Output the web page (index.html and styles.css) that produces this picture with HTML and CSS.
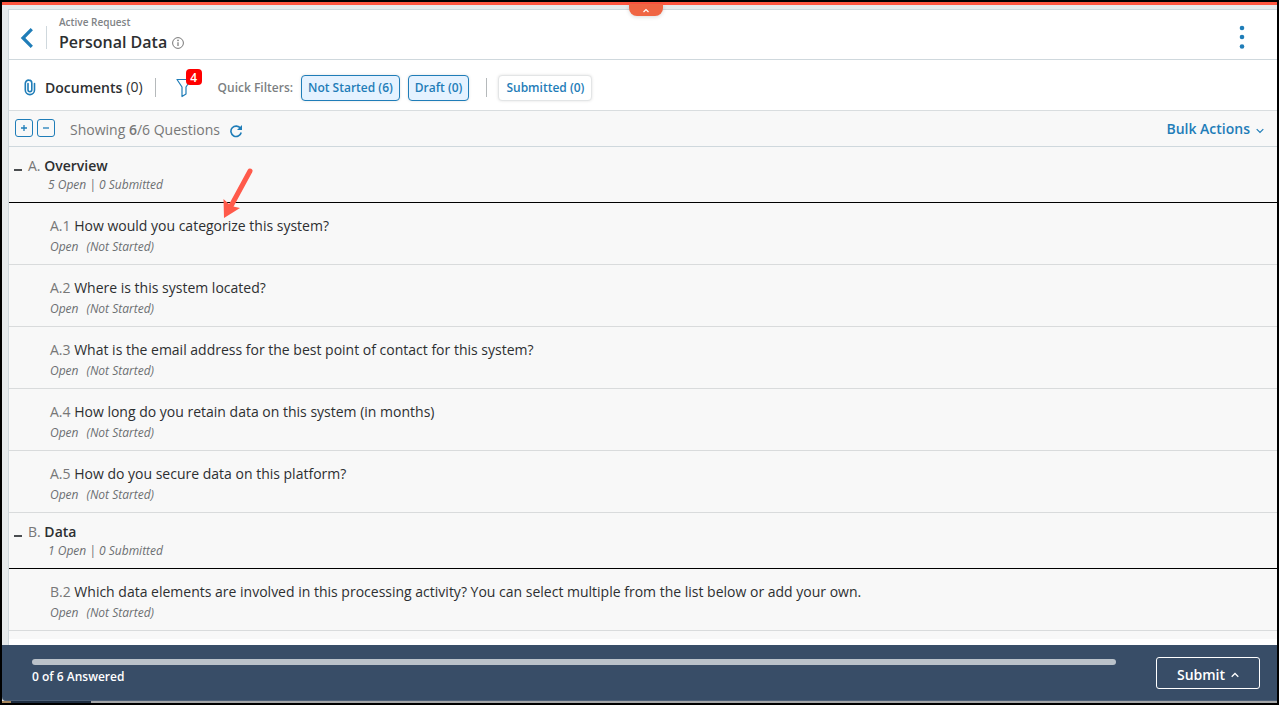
FILE: index.html
```html
<!DOCTYPE html>
<html lang="en">
<head>
<meta charset="utf-8">
<title>Personal Data</title>
<meta name="viewport" content="width=device-width, initial-scale=1">
<link rel="stylesheet" href="styles.css">
</head>
<body>
<div class="frame">
  <div class="accent"></div>
  <button class="pull-tab" aria-label="Collapse header"><svg width="8" height="5" viewBox="0 0 8 5"><path d="M1.500 4 4 1.500 6.500 4" fill="none" stroke="#fff" stroke-width="1.200"/></svg></button>
  <main class="panel">
    <header class="page-header">
      <button class="back" aria-label="Back"><svg width="14" height="20" viewBox="0 0 14 20"><path d="M11.800 1.200 3 10l8.800 8.800" fill="none" stroke="#1f7db8" stroke-width="3.200"/></svg></button>
      <div class="heading">
        <p class="eyebrow">Active Request</p>
        <h1 class="title">Personal Data <svg class="info" width="12" height="12" viewBox="0 0 12 12"><circle cx="6" cy="6" r="5.400" fill="none" stroke="#777" stroke-width="1"/><path d="M6 5.200V9" fill="none" stroke="#777" stroke-width="1.200"/><circle cx="6" cy="3.400" r=".8" fill="#777"/></svg></h1>
      </div>
      <button class="more" aria-label="More options"><svg width="6" height="24" viewBox="0 0 6 24"><g fill="#1f7db8"><circle cx="3" cy="3" r="2.300"/><circle cx="3" cy="12" r="2.300"/><circle cx="3" cy="21.500" r="2.300"/></g></svg></button>
    </header>

    <div class="filters">
      <button class="documents"><svg width="12" height="17" viewBox="0 0 12 17"><path d="M4 4.500v6.300a1.900 1.900 0 0 0 3.800 0V4A3 3 0 0 0 4.800 1.100 3.400 3.400 0 0 0 1.300 4.600v6.400a4.600 4.600 0 0 0 9.200 0V4.500" fill="none" stroke="#1f7db8" stroke-width="1.600" stroke-linecap="round"/></svg><span class="documents-label">Documents</span><span class="documents-count">(0)</span></button>
      <span class="divider"></span>
      <button class="funnel" aria-label="Filters"><svg width="16" height="20" viewBox="0 0 16 20"><path d="M1 1.500h14L10 9v7l-4 2.500V9z" fill="none" stroke="#1f7db8" stroke-width="1.200" stroke-linejoin="round"/></svg><span class="badge">4</span></button>
      <span class="quick-label">Quick Filters:</span>
      <button class="chip chip-on" aria-pressed="true">Not Started (6)</button>
      <button class="chip chip-on" aria-pressed="true">Draft (0)</button>
      <span class="divider divider-chips"></span>
      <button class="chip" aria-pressed="false">Submitted (0)</button>
    </div>

    <div class="toolbar">
      <button class="square" aria-label="Expand all"><svg width="8" height="8" viewBox="0 0 8 8"><path d="M4 1v6M1 4h6" stroke="#1f7db8" stroke-width="1.300"/></svg></button>
      <button class="square" aria-label="Collapse all"><svg width="8" height="8" viewBox="0 0 8 8"><path d="M1 4h6" stroke="#1f7db8" stroke-width="1.300"/></svg></button>
      <span class="showing">Showing <b>6</b>/6 Questions</span>
      <button class="refresh" aria-label="Refresh"><svg width="14" height="14" viewBox="0 0 14 14"><path d="M11.500 4.500A5.200 5.200 0 1 0 12.200 8.500" fill="none" stroke="#1f7db8" stroke-width="1.600"/><path d="M13 1v5H8z" fill="#1f7db8"/></svg></button>
      <button class="bulk">Bulk Actions <svg width="8" height="6" viewBox="0 0 8 6"><path d="M.7 1.200 4 4.500l3.300-3.300" fill="none" stroke="#1f7db8" stroke-width="1.200"/></svg></button>
    </div>

    <div class="questions">
      <section>
        <div class="section-head">
          <button class="toggle" aria-label="Collapse Overview"></button>
          <div>
            <h2 class="section-title"><span class="num">A.</span> Overview</h2>
            <p class="section-meta">5 Open | 0 Submitted</p>
          </div>
        </div>
        <ul class="list">
          <li class="item"><p class="question"><span class="num">A.1</span> How would you categorize this system?</p><p class="status"><span>Open</span><span>(Not Started)</span></p></li>
          <li class="item"><p class="question"><span class="num">A.2</span> Where is this system located?</p><p class="status"><span>Open</span><span>(Not Started)</span></p></li>
          <li class="item"><p class="question"><span class="num">A.3</span> What is the email address for the best point of contact for this system?</p><p class="status"><span>Open</span><span>(Not Started)</span></p></li>
          <li class="item"><p class="question"><span class="num">A.4</span> How long do you retain data on this system (in months)</p><p class="status"><span>Open</span><span>(Not Started)</span></p></li>
          <li class="item"><p class="question"><span class="num">A.5</span> How do you secure data on this platform?</p><p class="status"><span>Open</span><span>(Not Started)</span></p></li>
        </ul>
      </section>
      <section>
        <div class="section-head">
          <button class="toggle" aria-label="Collapse Data"></button>
          <div>
            <h2 class="section-title"><span class="num">B.</span> Data</h2>
            <p class="section-meta">1 Open | 0 Submitted</p>
          </div>
        </div>
        <ul class="list">
          <li class="item"><p class="question"><span class="num">B.2</span> Which data elements are involved in this processing activity? You can select multiple from the list below or add your own.</p><p class="status"><span>Open</span><span>(Not Started)</span></p></li>
        </ul>
      </section>
    </div>
  </main>

  <footer class="footer">
    <div class="progress">
      <div class="track" role="progressbar" aria-label="Questions answered" aria-valuemin="0" aria-valuemax="6" aria-valuenow="0"></div>
      <p class="answered">0 of 6 Answered</p>
    </div>
    <button class="submit">Submit <svg width="8" height="6" viewBox="0 0 8 6"><path d="M.7 4.800 4 1.500l3.300 3.300" fill="none" stroke="#fff" stroke-width="1.300"/></svg></button>
  </footer>
  <div class="edge"><span class="edge-tan"></span><span class="edge-dark"></span></div>

  <svg class="arrow" width="32" height="54" viewBox="0 0 32 54" aria-hidden="true"><path d="M28 5 9 40" stroke="#ff5a4b" stroke-width="5" stroke-linecap="round"/><path d="M1.500 33 2 52 18 42 9 40z" fill="#ff5a4b"/></svg>
</div>
</body>
</html>
```
FILE: styles.css
```css
* { box-sizing: border-box; }
body { margin: 0; font-family: "Open Sans", "Noto Sans", sans-serif; font-size: 14px; line-height: 20px; color: #2d2f31; }
p, h1, h2, ul { margin: 0; padding: 0; }
button { font: inherit; color: inherit; background: none; border: 0; padding: 0; cursor: pointer; }
svg { display: block; flex: none; }

.frame { position: relative; display: flex; flex-direction: column; min-height: 100vh; border: 2px solid #000; background: #e6eaec; }
.accent { height: 3px; background: #ff5640; }
.pull-tab { position: absolute; top: 2px; left: calc(50% - 11px); width: 34px; height: 12px; display: flex; align-items: center; justify-content: center; background: #f06543; border-radius: 0 0 8px 8px; box-shadow: 0 1px 4px rgba(0, 0, 0, .15); }

.panel { flex: 1; margin: 4px 0 0 6px; border-top: 1px solid #cfd8dd; border-left: 1px solid #cfd8dd; background: #fff; }

.page-header { display: flex; align-items: center; height: 50px; padding: 0 32px 0 11px; border-bottom: 1px solid #cfd8dd; }
.back { padding: 7px 12px 0 0; }
.heading { position: relative; padding: 1px 0 0 13px; }
.heading::before { content: ""; position: absolute; left: 0; top: 12px; bottom: 6px; width: 1px; background: #cfd8dd; }
.eyebrow { font-size: 10px; line-height: 14px; font-weight: 600; color: #808386; }
.title { display: flex; align-items: center; gap: 5px; font-size: 16px; line-height: 26px; font-weight: 600; }
.info { margin-top: 2px; }
.more { margin-left: auto; padding-top: 5px; }

.filters { display: flex; align-items: center; height: 51px; padding: 5px 16px 0 15px; border-bottom: 1px solid #d9dddf; }
.documents { display: flex; align-items: center; }
.documents-label { margin-left: 9px; font-weight: 600; }
.documents-count { margin: 0 12px 2px 4px; }
.divider { width: 1px; height: 19px; background: #b5b9bb; }
.funnel { position: relative; margin: 0 26px 0 20px; }
.badge { position: absolute; left: 10px; top: -9px; width: 16px; height: 16px; border-radius: 4px; background: #f00; color: #fff; font-size: 12px; line-height: 17px; font-weight: 600; }
.quick-label { margin-right: 8px; font-size: 12px; font-weight: 600; color: #7c7f82; }
.chip { height: 26px; padding: 0 7px; border: 1px solid #e3e5e6; border-radius: 4px; background: #fff; box-shadow: 0 0 3px rgba(0, 0, 0, .12); color: #1f7db8; font-size: 12px; line-height: 18px; font-weight: 600; }
.chip-on { margin-right: 8px; padding: 0 6px; border-color: #1f7db8; background: #e5f2ff; }
.divider-chips { margin: 0 11px 0 9px; }

.toolbar { display: flex; align-items: center; height: 36px; padding: 0 13px 0 6px; border-bottom: 1px solid #cfd8dd; background: #f8f8f8; }
.square { display: flex; align-items: center; justify-content: center; width: 18px; height: 18px; margin: 0 4px 2px 0; border: 1px solid #1f7db8; border-radius: 3px; }
.showing { margin: 2px 9px 0 11px; color: #777; }
.showing b { font-weight: 600; }
.refresh { padding-top: 4px; }
.bulk { display: flex; align-items: center; gap: 6px; margin-left: auto; color: #1f7db8; font-weight: 600; }
.bulk svg { margin-top: 4px; }

.questions { padding-bottom: 8px; background: #f8f8f8; }
.section-head { display: flex; height: 56px; padding: 9px 16px 0 5px; border-bottom: 1px solid #000; }
.toggle { width: 8px; height: 2px; margin: 13px 6px 0 0; background: #4a4d50; }
.section-title { font-size: 14px; line-height: 20px; font-weight: 600; }
.section-title .num { font-weight: 400; }
.num { color: #777; }
.section-meta { padding-left: 20px; font-size: 12px; line-height: 18px; font-style: italic; color: #6c6f72; }
.list { list-style: none; }
.item { height: 62px; padding: 13px 16px 0 41px; border-bottom: 1px solid #d9dbdc; }
.status { display: flex; gap: 8px; font-size: 12px; line-height: 22px; font-style: italic; color: #6c6f72; }

.footer { display: flex; align-items: center; height: 56px; padding: 0 17px 0 30px; border-bottom: 1px solid #4d6078; border-radius: 0 0 0 4px; background: #384d67; color: #fff; }
.progress { flex: 1; margin-right: 40px; }
.track { height: 6px; border-radius: 3px; background: #bac2ca; }
.answered { padding-top: 2px; font-size: 12px; line-height: 20px; font-weight: 600; }
.submit { display: flex; align-items: center; justify-content: center; gap: 6px; width: 104px; height: 32px; padding-top: 4px; border: 1px solid #fff; border-radius: 3px; font-weight: 600; }
.edge { display: flex; height: 2px; background: #a4a6a8; }
.edge-tan { width: 9px; background: #a5865d; }
.edge-dark { width: 80px; background: #1f2d40; }

.arrow { position: absolute; left: 220px; top: 164px; }
```
